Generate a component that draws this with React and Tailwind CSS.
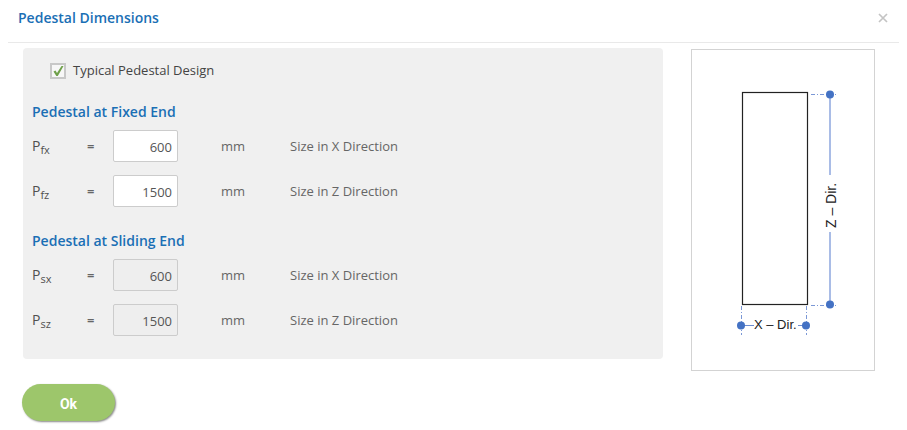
import { useState } from "react";

function DimensionRow({ id, sub, value, axis, disabled, onChange }) {
  return (
    <div className="grid h-8 grid-cols-[55px_26px_108px_69px_1fr] items-center text-[13px] text-[#666]">
      <label htmlFor={id} className="text-sm font-medium text-[#505050]">
        P<sub className="text-[11px]">{sub}</sub>
      </label>
      <span className="pt-0.5 font-semibold">=</span>
      <input
        id={id}
        type="text"
        value={value}
        disabled={disabled}
        onChange={onChange}
        className="h-8 w-[65px] rounded-xs border border-[#ccc] bg-white pt-0.5 pr-[5px] text-right text-[#555] disabled:bg-[#eee]"
      />
      <span className="pt-0.5">mm</span>
      <span className="pt-0.5">Size in {axis} Direction</span>
    </div>
  );
}

function PedestalDiagram() {
  return (
    <svg viewBox="0 0 182 320" className="block w-full" role="img" aria-label="Pedestal plan">
      <rect x="50.5" y="42.5" width="65" height="212" fill="none" stroke="#222" strokeWidth="1.2" />
      <g stroke="#7b98d6" strokeWidth="1" strokeDasharray="4 2 1 2">
        <path d="M119 44.5H146M119 255.5H146M49.500 256V285M114.500 256V285" />
      </g>
      <g stroke="#a9bce6" strokeWidth="2">
        <path d="M138 44V125M138 182V254" />
      </g>
      <path d="M49 275.500H62M106 275.500H114" stroke="#6d8dd0" strokeWidth="1.200" />
      <g fill="#4472c4">
        <circle cx="138" cy="44.500" r="4" />
        <circle cx="138" cy="254.500" r="4" />
        <circle cx="49" cy="275.500" r="4" />
        <circle cx="114" cy="275.500" r="4" />
      </g>
      <g fill="#222" className="font-['Liberation_Sans',Arial,sans-serif]">
        <text x="62" y="279" fontSize="13">X – Dir.</text>
        <text fontSize="14" transform="translate(144 178) rotate(-90)">Z – Dir.</text>
      </g>
    </svg>
  );
}

export default function App() {
  const [typical, setTypical] = useState(true);
  const [fixed, setFixed] = useState({ x: "600", z: "1500" });
  const [sliding, setSliding] = useState({ x: "600", z: "1500" });
  const shown = typical ? fixed : sliding;

  return (
    <div className="bg-white font-['Open_Sans','Noto_Sans',sans-serif]">
      <header className="mx-2 flex h-[43px] items-center justify-between border-b border-[#e9e9e9] pr-[11px] pb-[7px] pl-[10px]">
        <h1 className="text-sm font-semibold text-[#1a6fb5]">Pedestal Dimensions</h1>
        <button type="button" aria-label="Close" className="text-[#c4c4c4]">
          <svg viewBox="0 0 10 10" className="h-[10px] w-[10px]" fill="none" stroke="currentColor" strokeWidth="1.7">
            <path d="M1 1L9 9M9 1L1 9" />
          </svg>
        </button>
      </header>

      <main className="flex items-start gap-7 pt-[5px] pr-8 pl-[23px]">
        <section className="flex-1 rounded-sm bg-[#f0f0f0] px-[9px] pt-3 pb-[23px]">
          <label className="flex h-[22px] items-center gap-[7px] pl-[18px] text-[13px] font-medium text-[#444]">
            <span className="relative flex h-4 w-4">
              <input
                type="checkbox"
                checked={typical}
                onChange={(e) => setTypical(e.target.checked)}
                className="peer h-4 w-4 appearance-none border-2 border-[#c8c8c8] bg-[#f7f7f7]"
              />
              <svg viewBox="0 0 16 16" className="pointer-events-none absolute inset-0 hidden peer-checked:block" fill="#6fa04a">
                <path d="M3.500 8.500L5.500 7.500L7 10L11.500 3H13.500L7.800 13H6.300Z" />
              </svg>
            </span>
            Typical Pedestal Design
          </label>

          <h2 className="mt-5 text-sm leading-5 font-semibold text-[#1a6fb5]">Pedestal at Fixed End</h2>
          <div className="mt-2 grid gap-[13px]">
            <DimensionRow id="pfx" sub="fx" axis="X" value={fixed.x} onChange={(e) => setFixed({ ...fixed, x: e.target.value })} />
            <DimensionRow id="pfz" sub="fz" axis="Z" value={fixed.z} onChange={(e) => setFixed({ ...fixed, z: e.target.value })} />
          </div>

          <h2 className="mt-6 text-sm leading-5 font-semibold text-[#1a6fb5]">Pedestal at Sliding End</h2>
          <div className="mt-2 grid gap-[13px]">
            <DimensionRow id="psx" sub="sx" axis="X" value={shown.x} disabled={typical} onChange={(e) => setSliding({ ...sliding, x: e.target.value })} />
            <DimensionRow id="psz" sub="sz" axis="Z" value={shown.z} disabled={typical} onChange={(e) => setSliding({ ...sliding, z: e.target.value })} />
          </div>
        </section>

        <figure className="mt-px w-[184px] border border-[#d3d3d3]">
          <PedestalDiagram />
        </figure>
      </main>

      <footer className="px-[22px] pt-[13px] pb-2">
        <button type="button" className="h-[37px] w-[93px] rounded-full bg-[#9dc66b] pt-0.5 font-['Roboto',sans-serif] text-sm font-bold text-white shadow-[1px_1px_2px_#888]">
          Ok
        </button>
      </footer>
    </div>
  );
}
